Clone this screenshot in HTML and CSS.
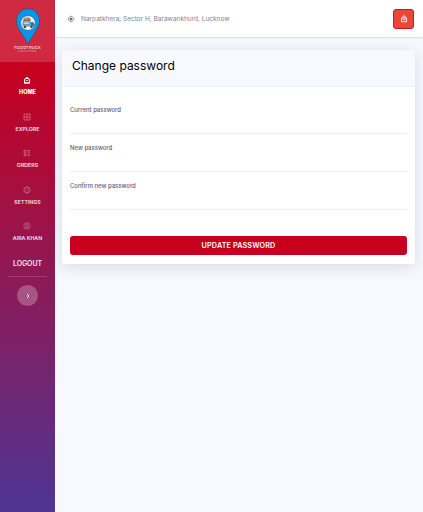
FILE: index.html
```html
<!DOCTYPE html>
<html lang="en">
<head>
    <meta charset="UTF-8">
    <meta name="viewport" content="width=device-width, initial-scale=1.0">
    <title>Change password</title>
    <link rel="stylesheet" href="styles.css">
</head>
<body>
    <div class="layout">
        <!-- Sidebar -->
        <aside class="sidebar">
            <div class="brand">
                <svg class="brand-pin" viewBox="0 0 26 37">
                    <path d="M13 .8C6.200.8 1.500 6 1.500 12.700c0 8.300 7 13.300 11.500 23.300 4.500-10 11.500-15 11.500-23.300C24.500 6 19.800.8 13 .8z" fill="#0c94e8" stroke="#235a88" stroke-width=".8"/>
                    <circle cx="13" cy="15" r="7.300" fill="#f3f3ef" stroke="#345b78" stroke-width=".5"/>
                    <path d="M7.500 13.500h8v5h-8z" fill="#63a4bc"/>
                    <path d="M15.500 14H18l1.500 2v2.500h-4z" fill="#267ba3"/>
                    <path d="M8 12l2-2.500h4l2 2.500-1 1.500H8z" fill="#80736b"/>
                    <path d="M9 14.500h5V16H9z" fill="#ddd7bd"/>
                    <path d="M10 9.300h3v2h-3z" fill="#d9a469"/>
                    <circle cx="10" cy="19" r="1.200" fill="#394552"/>
                    <circle cx="16.500" cy="19" r="1.200" fill="#394552"/>
                </svg>
                <span class="brand-name">FOODTRUCK</span>
                <span class="brand-sub">LOCATOR</span>
            </div>

            <nav class="nav">
                <a class="nav-item active">
                    <svg class="nav-icon" viewBox="0 0 8 8"><path d="M1.600 7V3.400L4 1.400l2.400 2V7z" fill="none" stroke="currentColor" stroke-width="1.100"/><path d="M3.200 4.500h1.600M1 6.900h6" stroke="currentColor" stroke-width=".9"/></svg>
                    <span class="nav-label">HOME</span>
                </a>
                <a class="nav-item">
                    <svg class="nav-icon" viewBox="0 0 8 8"><path d="M1 1h6v6H1zM4 1v6M1 4h6" fill="none" stroke="currentColor" stroke-width=".7"/></svg>
                    <span class="nav-label">EXPLORE</span>
                </a>
                <a class="nav-item">
                    <svg class="nav-icon" viewBox="0 0 8 8"><path d="M1 1.300h2v2H1zM1 4.800h2v2H1zM4.300 1.500H7M4.300 3.100H7M4.300 5H7M4.300 6.600H7" fill="none" stroke="currentColor" stroke-width=".7"/></svg>
                    <span class="nav-label">ORDERS</span>
                </a>
                <a class="nav-item">
                    <svg class="nav-icon" viewBox="0 0 8 8"><path d="M3.200.9h1.600l.4 1 1.100-.1.800 1.400L6.500 4l.6.800-.8 1.400-1.100-.1-.4 1H3.200l-.4-1-1.100.1-.8-1.400.6-.8-.6-.8.8-1.400 1.100.1z" fill="none" stroke="currentColor" stroke-width=".8"/><circle cx="4" cy="4" r="1" fill="none" stroke="currentColor" stroke-width=".4"/></svg>
                    <span class="nav-label">SETTINGS</span>
                </a>
                <a class="nav-item">
                    <svg class="nav-icon" viewBox="0 0 8 8"><g fill="none" stroke="currentColor" stroke-width=".6"><circle cx="4" cy="4" r="3.200"/><circle cx="4" cy="3.200" r="1.100"/><path d="M1.900 6.200c.8-1.500 3.400-1.500 4.200 0"/></g></svg>
                    <span class="nav-label">AIRA KHAN</span>
                </a>
            </nav>

            <a class="logout">LOGOUT</a>
            <div class="divider"></div>
            <button class="toggle" aria-label="Toggle sidebar">
                <svg viewBox="0 0 6 6"><path d="M2 1l2 2-2 2" fill="none" stroke="currentColor" stroke-width="1"/></svg>
            </button>
        </aside>

        <!-- Page content -->
        <div class="content">
            <header class="topbar">
                <div class="location">
                    <svg viewBox="0 0 8 8"><circle cx="4" cy="4" r="2.500" fill="none" stroke="currentColor" stroke-width=".6"/><circle cx="4" cy="4" r="1.200" fill="currentColor"/><path d="M4 .6v1M4 6.400v1M.6 4h1M6.400 4h1" stroke="currentColor" stroke-width=".6"/></svg>
                    <span>Narpatkhera, Sector H, Barawankhurd, Lucknow</span>
                </div>
                <button class="bag" aria-label="Bag">
                    <svg viewBox="0 0 8 8"><path d="M2.600 2.900V2.200a1.400 1.400 0 0 1 2.800 0v.7" fill="none" stroke="currentColor" stroke-width=".8"/><path d="M1.500 3h5v3.800h-5z" fill="none" stroke="currentColor" stroke-width=".9"/><path d="M2.900 4.700h2.200" stroke="currentColor" stroke-width=".9"/></svg>
                </button>
            </header>

            <main class="card">
                <div class="card-header">
                    <h1>Change password</h1>
                </div>
                <form class="card-body">
                    <div class="field">
                        <label for="current">Current password</label>
                        <input id="current" type="password">
                    </div>
                    <div class="field">
                        <label for="new">New password</label>
                        <input id="new" type="password">
                    </div>
                    <div class="field">
                        <label for="confirm">Confirm new password</label>
                        <input id="confirm" type="password">
                    </div>
                    <button class="submit" type="button">UPDATE PASSWORD</button>
                </form>
            </main>
        </div>
    </div>
</body>
</html>
```
FILE: styles.css
```css
/* General */
* {
    box-sizing: border-box;
}

body {
    margin: 0;
    font-family: Inter, "Liberation Sans", sans-serif;
    background-color: #f8f9fe;
    overflow: hidden;
}

button {
    padding: 0;
    border: none;
    font-family: inherit;
}

svg {
    display: block;
}

.layout {
    display: flex;
    height: 100vh;
}

/* Sidebar */
.sidebar {
    display: flex;
    flex-direction: column;
    align-items: center;
    width: 55px;
    flex-shrink: 0;
    background: linear-gradient(#c8001e 0, #c8001e 62px, #4e3594 100%);
    color: #fff;
}

.brand {
    display: flex;
    flex-direction: column;
    align-items: center;
    width: 100%;
    height: 62px;
    padding-top: 8px;
    background-color: rgba(255, 255, 255, 0.16);
}

.brand-pin {
    width: 26px;
    height: 37px;
}

.brand-name {
    margin-top: 1px;
    font-size: 4px;
    line-height: 4px;
    font-weight: 500;
    letter-spacing: 0.2px;
    opacity: 0.85;
}

.brand-sub {
    font-size: 2.5px;
    line-height: 3px;
    letter-spacing: 1px;
    opacity: 0.7;
}

.nav {
    padding-top: 14px;
}

.nav-item {
    display: flex;
    flex-direction: column;
    align-items: center;
    height: 36.5px;
}

.nav-icon {
    width: 8px;
    height: 8px;
    opacity: 0.45;
}

.nav-label {
    margin-top: 4px;
    font-size: 5.25px;
    line-height: 8px;
    font-weight: 600;
    white-space: nowrap;
    opacity: 0.88;
}

.active .nav-icon,
.active .nav-label {
    opacity: 1;
}

.active .nav-label {
    font-size: 5.5px;
    font-weight: 800;
}

.logout {
    margin-top: 0.5px;
    font-size: 6.9px;
    line-height: 9px;
    font-weight: 600;
    opacity: 0.9;
}

.divider {
    width: 39px;
    height: 1px;
    margin-top: 8px;
    background-color: rgba(255, 255, 255, 0.15);
}

.toggle {
    display: flex;
    align-items: center;
    justify-content: center;
    width: 21px;
    height: 21px;
    margin-top: 8px;
    border-radius: 50%;
    background-color: rgba(255, 255, 255, 0.25);
    color: #fff;
}

.toggle svg {
    width: 6px;
    height: 6px;
}

/* Content */
.content {
    flex: 1;
    min-width: 0;
}

.topbar {
    display: flex;
    align-items: center;
    justify-content: space-between;
    height: 37px;
    padding: 0 9px 0 12px;
    background-color: #fff;
    box-shadow: 0 0 2px rgba(60, 65, 85, 0.4);
}

.location {
    display: flex;
    align-items: center;
    gap: 6px;
    font-size: 6.53px;
    color: #7f8496;
}

.location svg {
    width: 8px;
    height: 8px;
    color: #626777;
}

.bag {
    display: flex;
    align-items: center;
    justify-content: center;
    width: 21px;
    height: 20px;
    border: 1px solid #d51318;
    border-radius: 3px;
    background-color: #e9473a;
    color: #fff;
}

.bag svg {
    width: 8px;
    height: 8px;
}

/* Card */
.card {
    height: 214px;
    margin: 13px 8px 0 7px;
    border-radius: 3px;
    background-color: #fff;
    box-shadow: 0 3px 15px rgba(50, 50, 93, 0.16);
}

.card-header {
    height: 37px;
    padding: 8px 10px;
    border-bottom: 1px solid #eceef5;
    border-radius: 3px 3px 0 0;
    background-color: #f8f9fe;
}

.card-header h1 {
    margin: 0;
    font-size: 12px;
    line-height: 16px;
    font-weight: 400;
    color: #000;
}

.card-body {
    padding: 17.5px 8px 0;
}

.field {
    display: flex;
    flex-direction: column;
    height: 38.3px;
}

.field label {
    font-size: 5.95px;
    line-height: 9px;
    font-weight: 500;
    color: #586079;
    align-self: flex-start;
}

.field input {
    width: 100%;
    height: 20px;
    padding: 0;
    border: none;
    border-bottom: 1px solid #ebecef;
    outline: none;
    background: transparent;
}

.submit {
    display: block;
    width: 100%;
    height: 19px;
    margin-top: 16.5px;
    border-radius: 3px;
    background-color: #c8001e;
    color: #fff;
    font-size: 7.2px;
    font-weight: 600;
    letter-spacing: 0.15px;
}
```
